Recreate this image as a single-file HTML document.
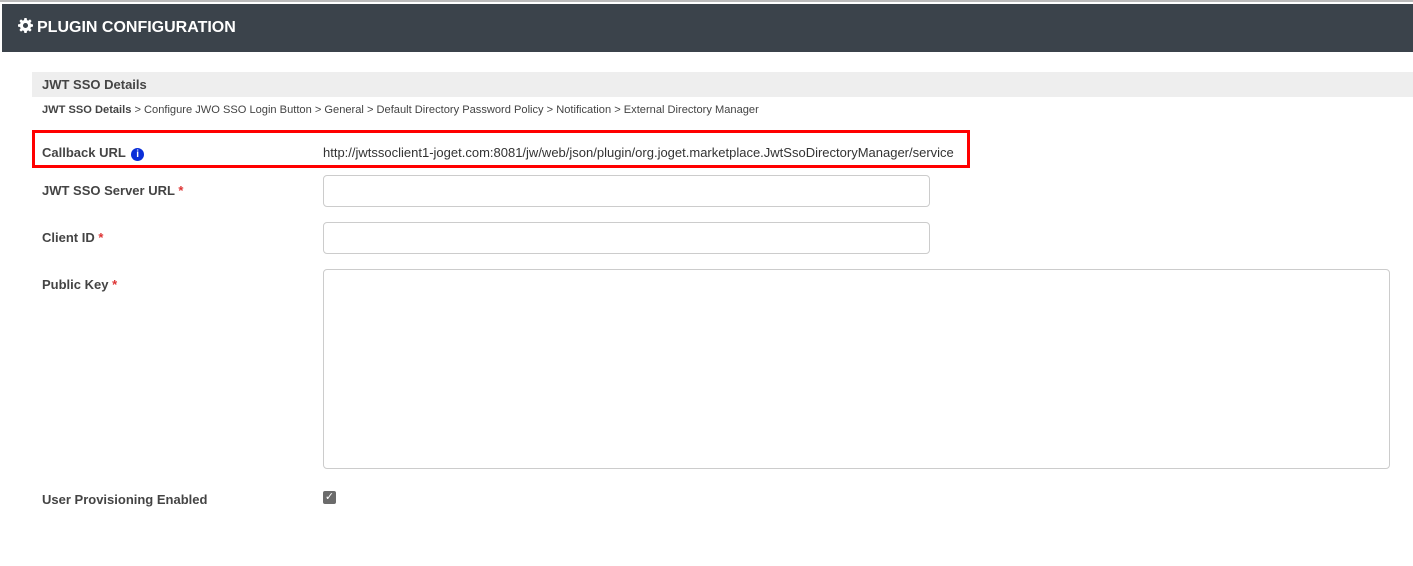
<!DOCTYPE html>
<html><head><style>
*{box-sizing:border-box}
body{margin:0;width:1413px;height:566px;background:#fff;font-family:"Liberation Sans",sans-serif;position:relative;overflow:hidden;color:#333}
.top{position:absolute;left:0;top:0;width:1413px;height:2px;background:#bbb}
.hdr{position:absolute;left:2px;top:4px;width:1411px;height:48px;background:#3b434b;color:#fff;font-weight:bold;font-size:16px;line-height:48px;padding-left:16px}
.bar{position:absolute;left:32px;top:72px;width:1381px;height:25px;background:#eeeeee;font-weight:bold;font-size:13px;line-height:25px;padding-left:10px;color:#444}
.crumb{position:absolute;left:42px;top:104px;font-size:11.1px;color:#444}
.lbl{position:absolute;left:42px;font-size:13px;font-weight:bold;color:#444}
.req{color:#d33}
.inp{position:absolute;left:323px;border:1px solid #ccc;border-radius:4px;background:#fff}
.red{position:absolute;left:32px;top:130px;width:938px;height:38px;border:3px solid #f00}
</style></head><body>
<div class="top"></div>
<div class="hdr"><svg width="15" height="15" viewBox="0 0 16 16" style="vertical-align:-1px;margin-right:4px"><path fill="#fff" d="M6.8 0h2.4l.4 2.2 1.4.6 1.8-1.3 1.7 1.7-1.3 1.8.6 1.4 2.2.4v2.4l-2.2.4-.6 1.4 1.3 1.8-1.7 1.7-1.8-1.3-1.4.6-.4 2.2H6.8l-.4-2.2-1.4-.6-1.8 1.3-1.7-1.7 1.3-1.8-.6-1.4L0 9.2V6.8l2.2-.4.6-1.4-1.3-1.8 1.7-1.7 1.8 1.3 1.4-.6zM8 5.3A2.7 2.7 0 1 0 8 10.7 2.7 2.7 0 1 0 8 5.3z"/></svg>PLUGIN CONFIGURATION</div>
<div class="bar">JWT SSO Details</div>
<div class="crumb"><b>JWT SSO Details</b> &gt; Configure JWO SSO Login Button &gt; General &gt; Default Directory Password Policy &gt; Notification &gt; External Directory Manager</div>
<div class="red"></div>
<div class="lbl" style="top:145px">Callback URL <span style="display:inline-block;margin-left:2px;width:13px;height:13px;border-radius:50%;background:#0a2fd8;color:#fff;font-size:10px;line-height:13px;text-align:center;vertical-align:0px">i</span></div>
<div style="position:absolute;left:323px;top:145px;font-size:13px;color:#333">http://jwtssoclient1-joget.com:8081/jw/web/json/plugin/org.joget.marketplace.JwtSsoDirectoryManager/service</div>
<div class="lbl" style="top:183px">JWT SSO Server URL <span class="req">*</span></div>
<div class="inp" style="top:175px;width:607px;height:32px"></div>
<div class="lbl" style="top:230px">Client ID <span class="req">*</span></div>
<div class="inp" style="top:222px;width:607px;height:32px"></div>
<div class="lbl" style="top:277px">Public Key <span class="req">*</span></div>
<div class="inp" style="top:269px;width:1067px;height:200px"></div>
<div class="lbl" style="top:492px">User Provisioning Enabled</div>
<div style="position:absolute;left:323px;top:491px;width:13px;height:13px;background:#6b6b6b;border-radius:2px;color:#fff;font-size:11px;line-height:13px;text-align:center">✓</div>
</body></html>
